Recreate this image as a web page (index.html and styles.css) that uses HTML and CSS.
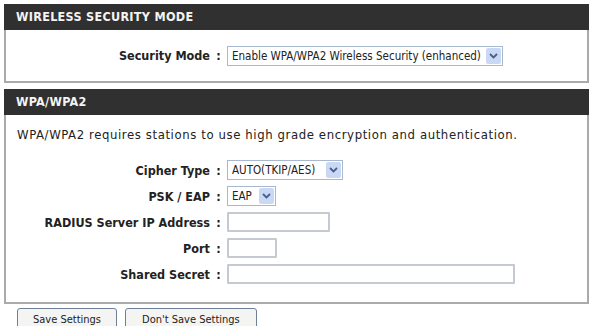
FILE: index.html
```html
<!DOCTYPE html>
<html lang="en">
<head>
  <meta charset="UTF-8">
  <title>Wireless Security</title>
  <link rel="stylesheet" href="styles.css">
</head>
<body>

  <div class="page">
    <!-- Security mode -->
    <div class="box box-mode">
      <div class="box-head">WIRELESS SECURITY MODE</div>
      <div class="box-body">
        <div class="row">
          <span class="label">Security Mode</span>
          <span class="colon">:</span>
          <div class="select select-mode">
            <span class="select-text">Enable WPA/WPA2 Wireless Security (enhanced)</span>
            <span class="select-arrow"><svg width="9" height="6" viewBox="0 0 9 6"><path d="M1 1 L4.5 4.5 L8 1" fill="none" stroke="#4a5f8c" stroke-width="1.8"/></svg></span>
          </div>
        </div>
      </div>
    </div>

    <!-- WPA settings -->
    <div class="box box-wpa">
      <div class="box-head">WPA/WPA2</div>
      <div class="box-body">
        <p class="info">WPA/WPA2 requires stations to use high grade encryption and authentication.</p>

        <div class="row">
          <span class="label">Cipher Type</span>
          <span class="colon">:</span>
          <div class="select select-cipher">
            <span class="select-text">AUTO(TKIP/AES)</span>
            <span class="select-arrow"><svg width="9" height="6" viewBox="0 0 9 6"><path d="M1 1 L4.5 4.5 L8 1" fill="none" stroke="#4a5f8c" stroke-width="1.8"/></svg></span>
          </div>
        </div>
        <div class="row">
          <span class="label">PSK / EAP</span>
          <span class="colon">:</span>
          <div class="select select-psk">
            <span class="select-text">EAP</span>
            <span class="select-arrow"><svg width="9" height="6" viewBox="0 0 9 6"><path d="M1 1 L4.5 4.5 L8 1" fill="none" stroke="#4a5f8c" stroke-width="1.8"/></svg></span>
          </div>
        </div>
        <div class="row">
          <span class="label">RADIUS Server IP Address</span>
          <span class="colon">:</span>
          <input type="text" class="field field-ip">
        </div>
        <div class="row">
          <span class="label">Port</span>
          <span class="colon">:</span>
          <input type="text" class="field field-port">
        </div>
        <div class="row">
          <span class="label">Shared Secret</span>
          <span class="colon">:</span>
          <input type="text" class="field field-secret">
        </div>
      </div>
    </div>

    <div class="actions">
      <button class="btn btn-save">Save Settings</button>
      <button class="btn btn-cancel">Don't Save Settings</button>
    </div>
  </div>

</body>
</html>
```

FILE: styles.css
```css
body {
  margin: 0;
  background-color: #ffffff;
  color: #222;
  font-family: "DejaVu Sans Condensed", "DejaVu Sans", sans-serif;
  font-size: 11px;
  overflow: hidden;
}

.page {
  padding: 4px 1px 0 4px;
}

.box {
  border: 2px solid #aaaaaa;
  border-top: none;
  background-color: #ffffff;
}

.box-wpa {
  margin-top: 6px;
}

.box-head {
  background-color: #303030;
  color: #f4f4f4;
  font-weight: bold;
  font-size: 12.5px;
  letter-spacing: 0.3px;
  height: 26px;
  line-height: 26px;
  padding-left: 12px;
  margin: 0 -2px;
}

.box-mode .box-body {
  height: 51px;
  display: flex;
  align-items: center;
}

.box-wpa .box-body {
  height: 186px;
  padding-top: 1px;
}

.info {
  margin: 11px 0 0 11px;
  font-size: 13px;
  letter-spacing: 0.6px;
  color: #222;
}

.row {
  display: flex;
  align-items: center;
  height: 26px;
}

.box-wpa .info + .row {
  margin-top: 15px;
}

.label {
  width: 204px;
  text-align: right;
  font-weight: bold;
  font-size: 12.5px;
  color: #222;
}

.colon {
  width: 17px;
  text-align: center;
  font-weight: bold;
  font-size: 12.5px;
}

.select {
  display: flex;
  align-items: center;
  height: 20px;
  border: 1px solid #a8b8d0;
  box-sizing: border-box;
  background-color: #ffffff;
  padding-left: 4px;
}

.select-text {
  flex: 1;
  font-size: 11.5px;
  color: #222;
  white-space: nowrap;
}

.select-arrow {
  width: 15px;
  height: 16px;
  margin: 1px;
  display: flex;
  align-items: center;
  justify-content: center;
  background-color: #c9d8f5;
  border-radius: 2px;
}

.select-mode { width: 276px; }
.select-cipher { width: 116px; }
.select-psk { width: 49px; }

.field {
  height: 20px;
  box-sizing: border-box;
  border: 2px solid #c5cad2;
  border-radius: 1px;
  padding: 0 3px;
  margin: 0;
  background-color: #ffffff;
}

.field-ip { width: 103px; }
.field-port { width: 50px; }
.field-secret { width: 288px; }

.actions {
  display: flex;
  gap: 8px;
  padding: 4px 0 0 13px;
}

.btn {
  height: 22px;
  border: 1px solid #6f7f98;
  border-radius: 3px;
  background-color: #f4f4f2;
  font-family: inherit;
  font-size: 11px;
  color: #222;
  padding: 0 15px;
}

.btn-cancel {
  padding: 0 16px;
}
```
